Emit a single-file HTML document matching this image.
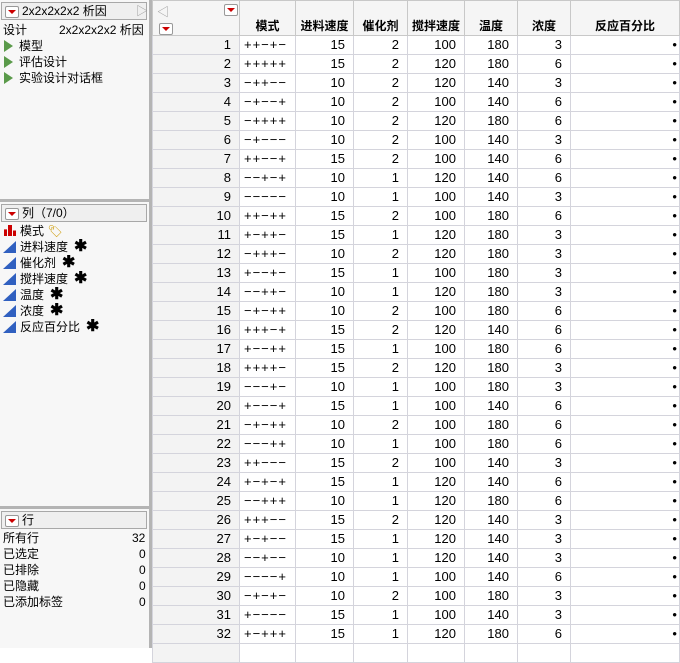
<!DOCTYPE html><html><head><meta charset="utf-8"><style>
body{margin:0;width:680px;height:648px;overflow:hidden;background:#fff;font-family:"Liberation Sans","Noto Sans CJK SC",sans-serif;font-size:12px;color:#000;position:relative}
.lp{position:absolute;left:0;top:0;width:149px;height:648px;background:#f7f7f7}
.div{position:absolute;left:149px;top:0;width:3px;height:648px;background:#b4b4b4}
.hs{position:absolute;left:0;width:149px;height:3px;background:#b4b4b4}
.hb{position:absolute;left:1px;width:146px;height:18px;background:#efefef;border:1px solid #a8a8a8;box-sizing:border-box}
.tri{display:inline-block;width:12px;height:10px;background:#fff;border:1px solid #999;border-radius:2px;position:relative;vertical-align:middle;margin:0 3px}
.tri:after{content:"";position:absolute;left:2px;top:3px;border-left:4px solid transparent;border-right:4px solid transparent;border-top:4px solid #c00}
.t{position:absolute;white-space:nowrap;line-height:16px}
.g{display:inline-block;width:0;height:0;border-top:6px solid transparent;border-bottom:6px solid transparent;border-left:9px solid #5a9a4a;margin:0 6px 0 4px;vertical-align:-2px}
.ct{display:inline-block;width:0;height:0;border-left:13px solid transparent;border-bottom:12px solid #3060c0;margin:0 4px 0 3px;vertical-align:-2px}
.ast{font-weight:bold;font-size:16px;margin-left:6px}
table{position:absolute;left:152px;top:0;border-collapse:collapse;table-layout:fixed}
td{height:18px;border:1px solid #d4d4dc;padding:0 8px 0 0;text-align:right;line-height:18px;font-size:13px}
td.rh{background:#f3f3f3}
td.p{text-align:left;padding-left:4px;letter-spacing:1px}
th{height:33px;border:1px solid #c8c8c8;background:#f5f5f5;font-weight:bold;vertical-align:bottom;padding:0 0 1px;font-size:12px}
</style></head><body>
<div class="lp"></div>
<div class="div"></div>
<div style="position:absolute;left:152px;top:0;width:528px;height:2px;background:#8c8c94"></div>
<div class="hb" style="top:2px"></div>
<div class="t" style="left:2px;top:3px"><span class="tri"></span>2x2x2x2x2 析因</div>
<div class="t" style="left:136px;top:3px;color:#999">▷</div>
<div class="t" style="left:3px;top:22px">设计</div>
<div class="t" style="left:59px;top:22px">2x2x2x2x2 析因</div>
<div class="t" style="left:0;top:38px"><span class="g"></span>模型</div>
<div class="t" style="left:0;top:54px"><span class="g"></span>评估设计</div>
<div class="t" style="left:0;top:70px"><span class="g"></span>实验设计对话框</div>
<div class="hs" style="top:199px"></div>
<div class="hb" style="top:204px"></div>
<div class="t" style="left:2px;top:205px"><span class="tri"></span>列（7/0）</div>
<div class="t" style="left:0;top:223px"><span style="display:inline-block;width:12px;height:11px;margin:0 4px 0 4px;background:linear-gradient(90deg,#c00 0 3px,transparent 3px 4px,#c00 4px 8px,transparent 8px 9px,#c00 9px);clip-path:polygon(0 40%,30% 40%,30% 0,70% 0,70% 50%,100% 50%,100% 100%,0 100%);vertical-align:-1px"></span>模式 <span style="color:#c90">🏷</span></div>
<div class="t" style="left:0;top:239px"><span class="ct"></span>进料速度<span class="ast">✱</span></div>
<div class="t" style="left:0;top:255px"><span class="ct"></span>催化剂<span class="ast">✱</span></div>
<div class="t" style="left:0;top:271px"><span class="ct"></span>搅拌速度<span class="ast">✱</span></div>
<div class="t" style="left:0;top:287px"><span class="ct"></span>温度<span class="ast">✱</span></div>
<div class="t" style="left:0;top:303px"><span class="ct"></span>浓度<span class="ast">✱</span></div>
<div class="t" style="left:0;top:319px"><span class="ct"></span>反应百分比<span class="ast">✱</span></div>
<div class="hs" style="top:506px"></div>
<div class="hb" style="top:511px"></div>
<div class="t" style="left:2px;top:512px"><span class="tri"></span>行</div>
<div class="t" style="left:3px;top:530px">所有行</div><div class="t" style="left:132px;top:530px">32</div>
<div class="t" style="left:3px;top:546px">已选定</div><div class="t" style="left:139px;top:546px">0</div>
<div class="t" style="left:3px;top:562px">已排除</div><div class="t" style="left:139px;top:562px">0</div>
<div class="t" style="left:3px;top:578px">已隐藏</div><div class="t" style="left:139px;top:578px">0</div>
<div class="t" style="left:3px;top:594px">已添加标签</div><div class="t" style="left:139px;top:594px">0</div>
<table>
<colgroup><col style="width:87px"><col style="width:55px"><col style="width:58px"><col style="width:54px"><col style="width:57px"><col style="width:53px"><col style="width:53px"><col style="width:109px"></colgroup>
<tr><th style="background:#f5f5f5;position:relative"><span class="tri" style="position:absolute;left:68px;top:3px"></span><span class="tri" style="position:absolute;left:3px;top:22px"></span><span style="position:absolute;left:4px;top:2px;color:#999;font-weight:normal">◁</span></th><th>模式</th><th>进料速度</th><th>催化剂</th><th>搅拌速度</th><th>温度</th><th>浓度</th><th>反应百分比</th></tr>
<tbody id="b"></tbody></table>
<script>
var d=["++-+-,15,2,100,180,3","+++++,15,2,120,180,6","-++--,10,2,120,140,3","-+--+,10,2,100,140,6","-++++,10,2,120,180,6","-+---,10,2,100,140,3","++--+,15,2,100,140,6","--+-+,10,1,120,140,6","-----,10,1,100,140,3","++-++,15,2,100,180,6","+-++-,15,1,120,180,3","-+++-,10,2,120,180,3","+--+-,15,1,100,180,3","--++-,10,1,120,180,3","-+-++,10,2,100,180,6","+++-+,15,2,120,140,6","+--++,15,1,100,180,6","++++-,15,2,120,180,3","---+-,10,1,100,180,3","+---+,15,1,100,140,6","-+-++,10,2,100,180,6","---++,10,1,100,180,6","++---,15,2,100,140,3","+-+-+,15,1,120,140,6","--+++,10,1,120,180,6","+++--,15,2,120,140,3","+-+--,15,1,120,140,3","--+--,10,1,120,140,3","----+,10,1,100,140,6","-+-+-,10,2,100,180,3","+----,15,1,100,140,3","+-+++,15,1,120,180,6"];
var h="";d.forEach(function(r,i){var c=r.split(",");h+='<tr><td class="rh">'+(i+1)+'</td><td class="p">'+c[0].replace(/-/g,"−")+'</td><td>'+c[1]+'</td><td>'+c[2]+'</td><td>'+c[3]+'</td><td>'+c[4]+'</td><td>'+c[5]+'</td><td style="padding-right:2px">•</td></tr>'});
h+='<tr><td class="rh"></td><td></td><td></td><td></td><td></td><td></td><td></td><td></td></tr>';
document.getElementById("b").innerHTML=h;
</script>
</body></html>
